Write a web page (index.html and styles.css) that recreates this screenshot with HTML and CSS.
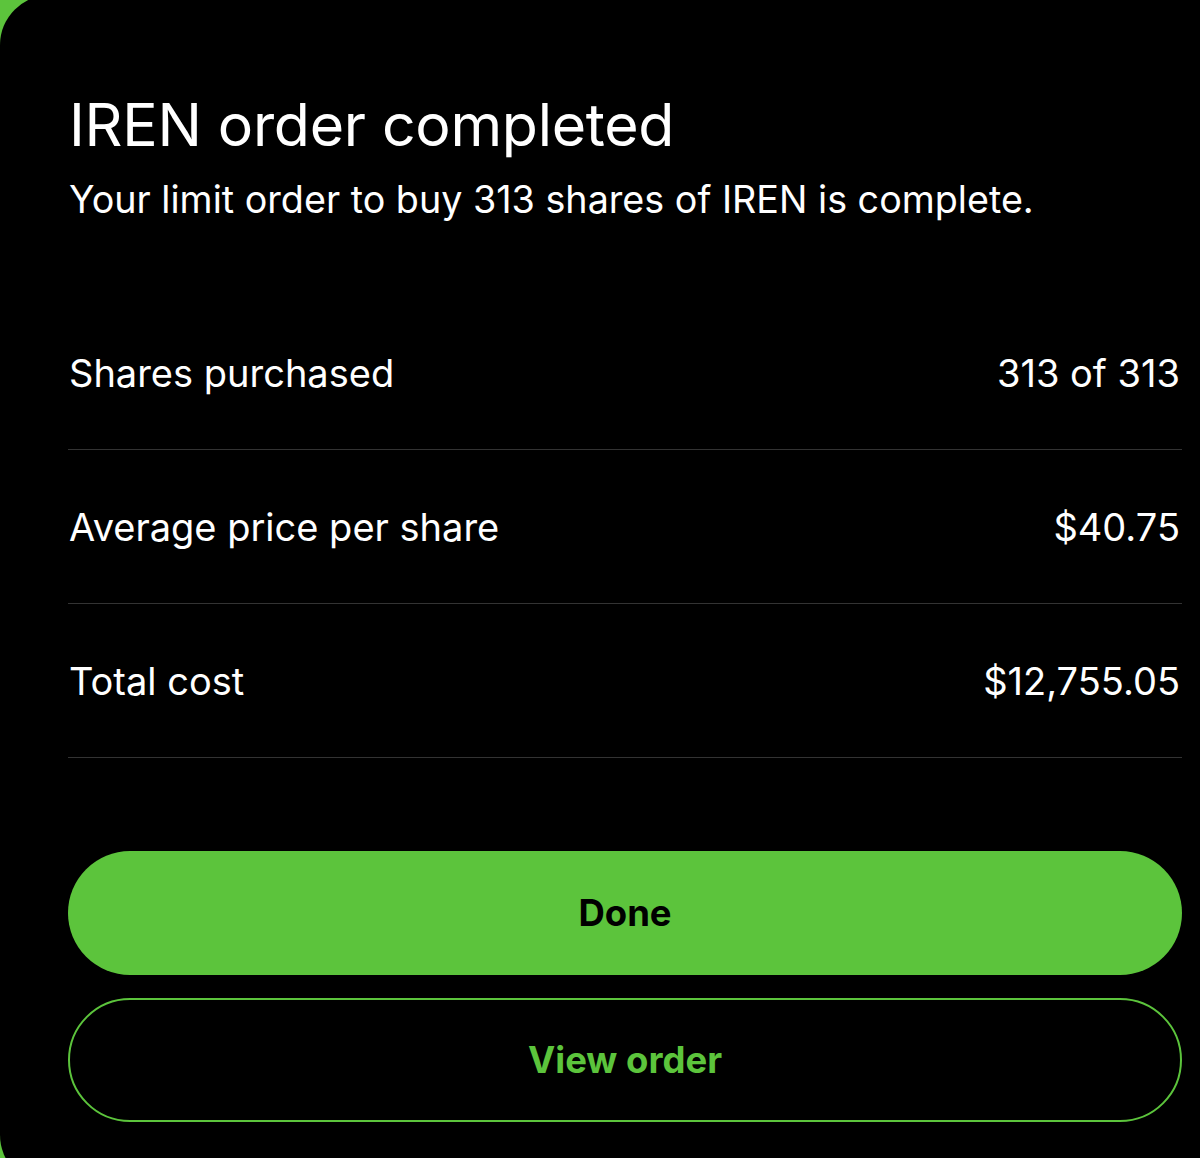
FILE: index.html
```html
<!DOCTYPE html>
<html>
<head>
<meta charset="utf-8">
<link rel="stylesheet" href="styles.css">
</head>
<body>
<div class="card">
  <h1 class="title">IREN order completed</h1>
  <p class="subtitle">Your limit order to buy 313 shares of IREN is complete.</p>
  <div class="rows">
    <div class="row"><span>Shares purchased</span><span>313 of 313</span></div>
    <div class="row"><span>Average price per share</span><span>$40.75</span></div>
    <div class="row"><span>Total cost</span><span>$12,755.05</span></div>
  </div>
  <div class="actions">
    <button class="btn btn-primary">Done</button>
    <button class="btn btn-outline">View order</button>
  </div>
</div>
</body>
</html>
```
FILE: styles.css
```css
html, body {
  margin: 0;
  padding: 0;
  height: 100%;
  overflow: hidden;
}
body {
  background: #5cc43c;
  font-family: Inter, "Noto Sans", sans-serif;
  color: #fff;
}
.card {
  background: #000;
  margin-top: -5px;
  margin-right: -40px;
  height: 1190px;
  border-radius: 50px 0 0 50px;
  box-sizing: border-box;
  padding: 95px 58px 0 68px;
  display: flex;
  flex-direction: column;
}
.title {
  margin: 0 0 0 1px;
  font-size: 59px;
  font-weight: 400;
  line-height: 70px;
  letter-spacing: -0.3px;
}
.subtitle {
  margin: 16px 0 0 1px;
  font-size: 37.7px;
  line-height: 46px;
  font-weight: 400;
}
.rows {
  margin-top: 74px;
  display: flex;
  flex-direction: column;
}
.row {
  height: 154px;
  box-sizing: border-box;
  border-bottom: 1.5px solid #333;
  display: flex;
  align-items: center;
  justify-content: space-between;
  font-size: 38px;
  padding: 0 2px 0 1px;
}
.actions {
  margin-top: 93px;
  display: flex;
  flex-direction: column;
  gap: 23px;
}
.btn {
  height: 124px;
  border-radius: 62px;
  font-family: inherit;
  font-size: 36.5px;
  font-weight: 700;
  cursor: pointer;
}
.btn-primary {
  background: #5cc43c;
  color: #000;
  border: none;
}
.btn-outline {
  background: #000;
  color: #5cc43c;
  border: 2px solid #5cc43c;
}
```
